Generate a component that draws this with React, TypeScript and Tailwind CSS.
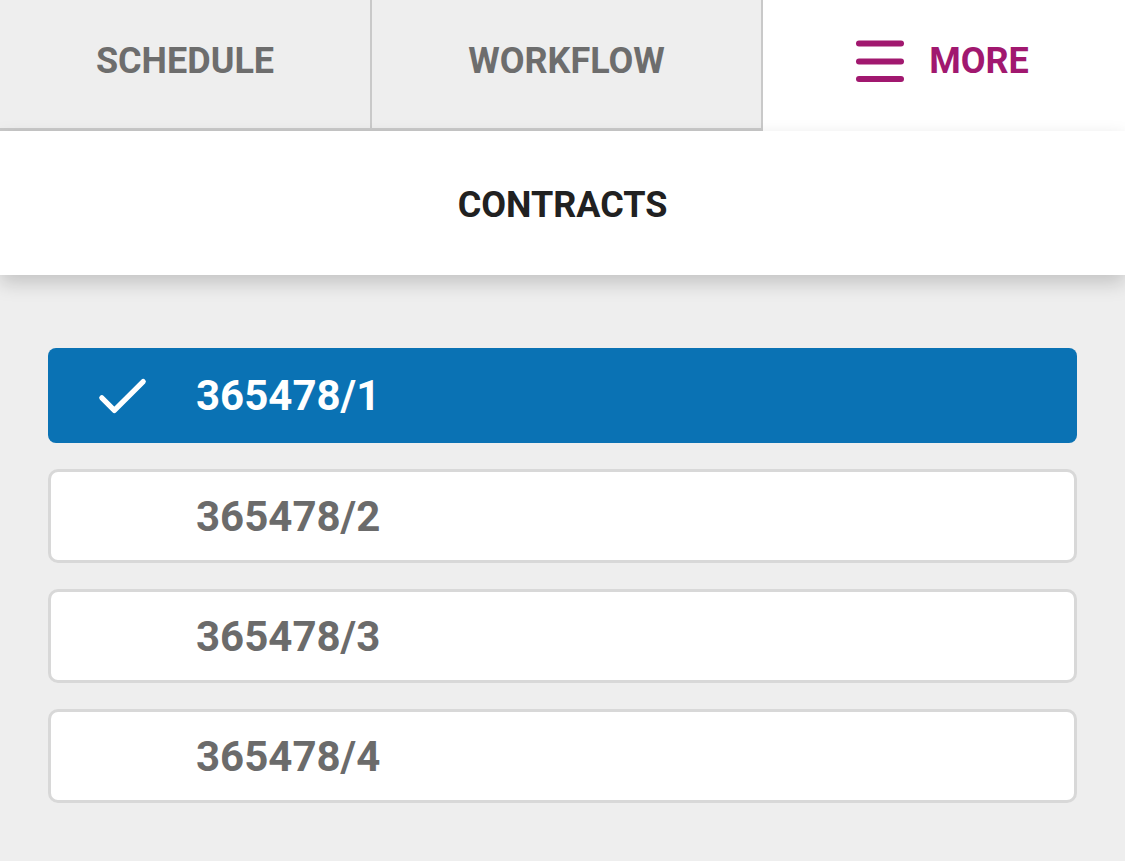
import React from "react";

const items = ["365478/1", "365478/2", "365478/3", "365478/4"];

export default function App() {
  return (
    <div className="w-[1125px] h-[861px] bg-[#eeeeee] overflow-hidden" style={{ fontFamily: "Roboto, 'Liberation Sans', sans-serif" }}>
      <div className="flex h-[131px]">
        <div className="w-[372px] flex items-center justify-center bg-[#eeeeee] border-r-2 border-b-[3px] border-[#c9c9c9]">
          <span className="text-[36px] font-bold text-[#6d6d6d] pb-[6px]">SCHEDULE</span>
        </div>
        <div className="w-[391px] flex items-center justify-center bg-[#eeeeee] border-r-2 border-b-[3px] border-[#c9c9c9]">
          <span className="text-[36px] font-bold text-[#6d6d6d] pb-[6px]">WORKFLOW</span>
        </div>
        <div className="flex-1 flex items-center justify-center bg-white pb-[10px] gap-[24px] pr-[4px]">
          <svg width="50" height="42" viewBox="0 0 50 42">
            <line x1="4" y1="3.5" x2="46" y2="3.5" stroke="#a1186f" strokeWidth="6" strokeLinecap="round" />
            <line x1="4" y1="21.5" x2="46" y2="21.5" stroke="#a1186f" strokeWidth="6" strokeLinecap="round" />
            <line x1="4" y1="39" x2="46" y2="39" stroke="#a1186f" strokeWidth="6" strokeLinecap="round" />
          </svg>
          <span className="text-[36px] font-bold text-[#a1186f]">MORE</span>
        </div>
      </div>
      <div className="h-[144px] bg-white flex items-center justify-center shadow-[0_8px_18px_rgba(0,0,0,0.18)] relative">
        <span className="text-[36px] font-bold text-[#212121] pt-[3px]">CONTRACTS</span>
      </div>
      <div className="flex flex-col gap-[26px] px-[48px] pt-[73px] w-[1125px]">
        {items.map((it, i) => (
          <div
            key={it}
            className={
              i === 0
                ? "h-[95px] rounded-[8px] bg-[#0a72b4] flex items-center pl-[50px]"
                : "h-[94px] rounded-[10px] bg-white border-[3px] border-[#d8d8d8] flex items-center pl-[47px]"
            }
          >
            <div className="w-[50px] flex items-center">
              {i === 0 && (
                <svg width="52" height="40" viewBox="0 0 52 40">
                  <path d="M4 22 L17 35 L47 5" fill="none" stroke="white" strokeWidth="5.5" strokeLinecap="round" strokeLinejoin="round" />
                </svg>
              )}
            </div>
            <span className={(i === 0 ? "text-white" : "text-[#6b6b6b]") + " ml-[48px] text-[42px] font-bold"}>{it}</span>
          </div>
        ))}
      </div>
    </div>
  );
}
